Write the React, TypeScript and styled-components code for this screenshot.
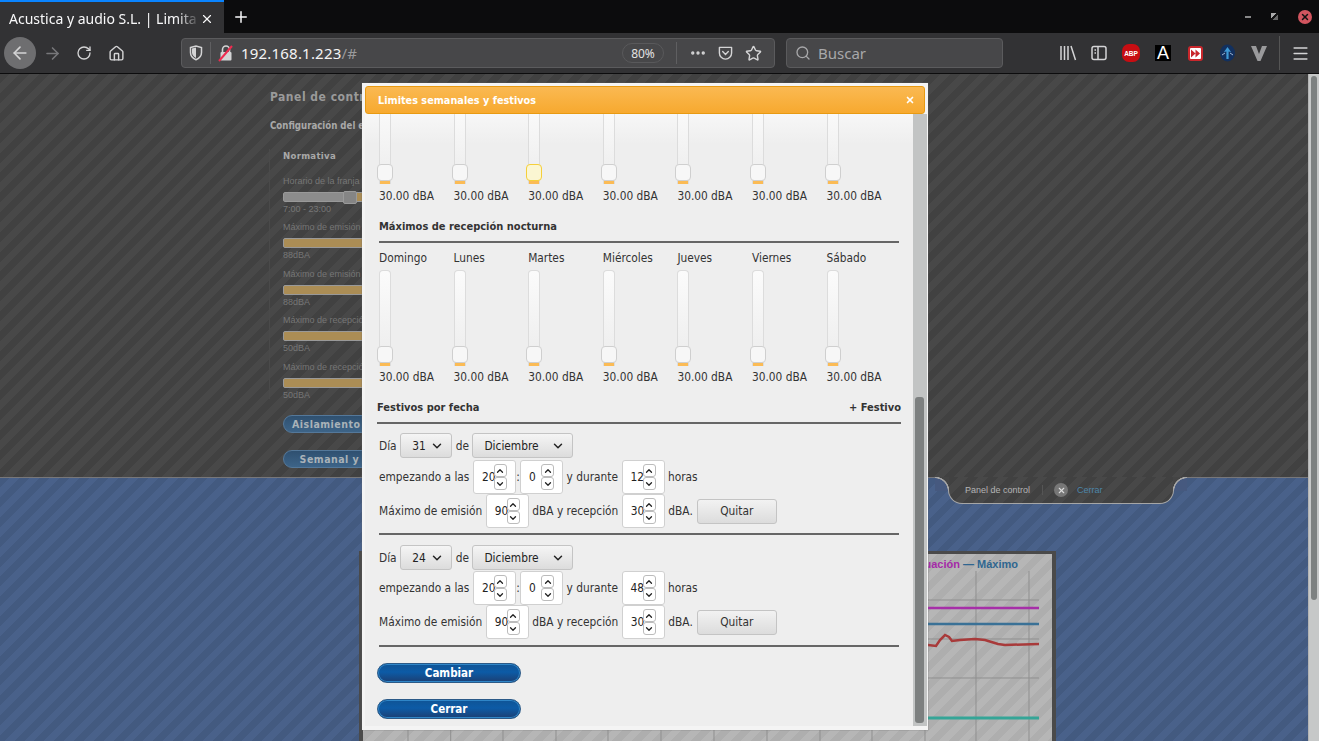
import React from 'react';
import styled, { createGlobalStyle, css } from 'styled-components';
import {
  ArrowLeft,
  ArrowRight,
  ChevronDown,
  ChevronUp,
  Home,
  Menu,
  MoreHorizontal,
  Plus,
  RotateCw,
  Search,
  Star,
  X,
} from 'lucide-react';

const GlobalStyle = createGlobalStyle`
  html, body {
    margin: 0;
    height: 100%;
    overflow: hidden;
    background: #333;
  }
  * {
    box-sizing: border-box;
  }
`;

const stripes = (a: string, b: string) => css`
  background-image: repeating-linear-gradient(135deg, ${a} 0 7px, ${b} 7px 14px);
`;

const condensed = `'DejaVu Sans Condensed', 'DejaVu Sans', sans-serif`;

const Screen = styled.div`
  width: 1319px;
  height: 741px;
  display: flex;
  flex-direction: column;
  position: relative;
  overflow: hidden;
  font-family: ${condensed};
`;

/* browser chrome */
const TabBar = styled.div`
  height: 33px;
  flex: none;
  display: flex;
  align-items: stretch;
  background: #0c0c0d;
  color: #f9f9fa;
  font-family: 'Noto Sans', sans-serif;
`;

const ActiveTab = styled.div`
  width: 224px;
  display: flex;
  align-items: center;
  padding: 2px 10px 0 9px;
  background: #323234;
  border-top: 2px solid #0a84ff;
  font-size: 14px;
`;

const TabTitle = styled.span`
  flex: 1;
  white-space: nowrap;
  -webkit-mask-image: linear-gradient(90deg, #000 88%, transparent);
  mask-image: linear-gradient(90deg, #000 88%, transparent);
`;

const NewTab = styled.div`
  width: 34px;
  display: flex;
  align-items: center;
  justify-content: center;
`;

const WindowControls = styled.div`
  margin-left: auto;
  display: flex;
  align-items: center;
  gap: 20px;
  padding: 0 7px 0 0;
`;

const Minimize = styled.span`
  width: 6px;
  height: 2px;
  background: #888;
`;

const Restore = styled.span`
  width: 7px;
  height: 7px;
  background: linear-gradient(135deg, #aaa 0 40%, #111 40% 60%, #666 60%);
`;

const CloseDot = styled.span`
  width: 14px;
  height: 14px;
  border-radius: 50%;
  background: #d2555f;
  color: #111;
  display: flex;
  align-items: center;
  justify-content: center;
`;

const NavBar = styled.div`
  height: 41px;
  flex: none;
  display: flex;
  align-items: center;
  background: #323234;
  border-bottom: 1px solid #0c0c0d;
  color: #d4d4d5;
  font-family: 'Noto Sans', sans-serif;
`;

const BackButton = styled.div`
  width: 32px;
  height: 32px;
  margin-left: 4px;
  border-radius: 50%;
  background: #6e6e70;
  display: flex;
  align-items: center;
  justify-content: center;
`;

const NavIcon = styled.div<{ $w: number; $dim?: boolean }>`
  width: ${(p) => p.$w}px;
  height: 30px;
  flex: none;
  display: flex;
  align-items: center;
  justify-content: center;
  color: ${(p) => (p.$dim ? '#77777a' : '#d4d4d5')};
`;

const UrlBar = styled.div`
  width: 594px;
  height: 30px;
  margin-left: 49px;
  display: flex;
  align-items: center;
  background: #474749;
  border: 1px solid #5b5b5d;
  border-radius: 4px;
`;

const UrlSep = styled.span`
  width: 1px;
  height: 22px;
  flex: none;
  background: #5f5f61;
`;

const UrlText = styled.span`
  width: 389px;
  font-size: 15px;
  letter-spacing: 0.2px;
  color: #f4f4f4;
  white-space: nowrap;

  span {
    color: #9a9a9c;
  }
`;

const ZoomPill = styled.span`
  width: 42px;
  height: 20px;
  flex: none;
  margin-right: 12px;
  border: 1px solid #59595b;
  border-radius: 10px;
  font-size: 12px;
  color: #e2e2e2;
  display: flex;
  align-items: center;
  justify-content: center;
`;

const SearchBar = styled.div`
  width: 217px;
  height: 30px;
  margin-left: 11px;
  padding-left: 8px;
  display: flex;
  align-items: center;
  gap: 7px;
  background: #474749;
  border: 1px solid #5b5b5d;
  border-radius: 4px;
  font-size: 15px;
  color: #a8a8aa;
`;

const Tools = styled.div`
  margin-left: 50px;
  display: flex;
  align-items: center;
`;

const ToolSep = styled.span`
  width: 1px;
  height: 34px;
  margin: 0 4px 0 4px;
  background: #555;
`;

const AbpBadge = styled.div`
  width: 18px;
  height: 18px;
  border-radius: 7px;
  background: #c70d12;
  color: #fff;
  font: bold 6.5px 'Liberation Sans', sans-serif;
  display: flex;
  align-items: center;
  justify-content: center;
`;

const BlackBadge = styled.div`
  width: 16px;
  height: 16px;
  background: #000;
  color: #fff;
  font: 18px 'Liberation Sans', sans-serif;
  display: flex;
  align-items: center;
  justify-content: center;
`;

const RedBadge = styled.div`
  width: 15px;
  height: 15px;
  border: 2px solid #c9272c;
  border-radius: 3px;
  background: #fff;
  display: flex;
  align-items: center;
  justify-content: center;
`;

/* page behind the dialog */
const Viewport = styled.div`
  flex: 1;
  min-height: 0;
  display: flex;
`;

const Page = styled.div`
  flex: 1;
  min-width: 0;
  display: flex;
  flex-direction: column;
  overflow: hidden;
`;

const PageScrollbar = styled.div`
  width: 11px;
  flex: none;
  padding: 2px 2px 0;
  background: #c6c8c8;
  border-left: 1px solid #b4b4b4;
`;

const PageThumb = styled.div`
  height: 524px;
  background: #7d8181;
  border-radius: 3px;
`;

const ControlPanel = styled.div`
  height: 404px;
  flex: none;
  padding: 15px 0 0 270px;
  ${stripes('#414141', '#484848')}
  border-bottom: 1px solid #77777a;
`;

const PanelTitle = styled.div`
  font-size: 12px;
  line-height: 16px;
  font-weight: bold;
  letter-spacing: 0.5px;
  color: #9a9a9a;
`;

const PanelSub = styled.div`
  margin-top: 14px;
  font-size: 9.6px;
  line-height: 14px;
  font-weight: bold;
  color: #a8a8a8;
`;

const PanelColumn = styled.div`
  margin: 16px 0 0 -1px;
  padding-left: 13px;
  border-left: 1px solid #4a4a4a;
  height: 250px;
`;

const PanelHeading = styled.div`
  font-size: 9.5px;
  line-height: 14px;
  font-weight: bold;
  color: #a8a8a8;
  letter-spacing: 0.3px;
`;

const FieldLabel = styled.div<{ $top: number }>`
  margin-top: ${(p) => p.$top}px;
  font: 9px/12px 'Liberation Sans', sans-serif;
  color: #767676;
  white-space: nowrap;
`;

const Bar = styled.div<{ $range?: boolean }>`
  height: 10px;
  width: 300px;
  margin-top: 5px;
  border: 1px solid #999;
  border-radius: 2px;
  background: ${(p) => (p.$range ? 'linear-gradient(90deg, #8c8c8c 0 60px, #a98c56 60px)' : '#ab8d55')};
  position: relative;
`;

const BarHandle = styled.span`
  position: absolute;
  left: 59px;
  top: -2px;
  width: 14px;
  height: 13px;
  background: #858585;
  border: 1px solid #9a9a9a;
  border-radius: 2px;
`;

const BarValue = styled.div`
  margin-top: 1px;
  font: 9px/12px 'Liberation Sans', sans-serif;
  color: #767676;
`;

const PanelButton = styled.div<{ $top: number }>`
  width: 240px;
  height: 18px;
  margin-top: ${(p) => p.$top}px;
  padding-left: 8px;
  border: 1px solid #54789a;
  border-radius: 9px;
  background: linear-gradient(#2f5070, #3d6488);
  color: #a9b2b8;
  font-size: 10.5px;
  line-height: 16px;
  font-weight: bold;
  letter-spacing: 0.5px;
  white-space: nowrap;
`;

const BlueArea = styled.div`
  flex: 1;
  min-height: 0;
  ${stripes('#435a80', '#49618a')}
`;

const FooterTab = styled.div`
  width: 226px;
  height: 27px;
  margin-left: 948px;
  margin-top: -1px;
  padding-left: 16px;
  display: flex;
  align-items: center;
  position: relative;
  ${stripes('#414141', '#484848')}
  border: 1px solid #a6a6a6;
  border-top: none;
  border-radius: 0 0 14px 14px;
  font: 9px 'Liberation Sans', sans-serif;
  color: #b4b4b4;

  &::before,
  &::after {
    content: '';
    position: absolute;
    top: 0;
    width: 14px;
    height: 14px;
  }

  &::before {
    left: -14px;
    background: radial-gradient(circle at 0 100%, #46597f 12.5px, #a6a6a6 13px 14px, #444 14.5px);
  }

  &::after {
    right: -14px;
    background: radial-gradient(circle at 100% 100%, #46597f 12.5px, #a6a6a6 13px 14px, #444 14.5px);
  }
`;

const FooterSep = styled.span`
  width: 1px;
  height: 10px;
  margin: 0 11px 0 12px;
  background: #555;
`;

const FooterClose = styled.span`
  width: 14px;
  height: 14px;
  margin-right: 9px;
  border-radius: 50%;
  background: #777;
  color: #ddd;
  display: flex;
  align-items: center;
  justify-content: center;
`;

const FooterLink = styled.span`
  color: #4d86a8;
`;

const Chart = styled.div`
  width: 697px;
  height: 200px;
  margin: 47px 0 0 359px;
  border: solid #4a4a4a;
  border-width: 3px 4px 0 4px;
  position: relative;
  ${stripes('#aeaeae', '#b6b6b6')}
`;

const ChartTab = styled.span`
  position: absolute;
  left: 0;
  top: -31px;
  width: 4px;
  height: 18px;
  background: #c9ccd0;
`;

const Legend = styled.div`
  height: 17px;
  padding: 3px 34px 0 0;
  text-align: right;
  font: bold 11px/14px 'Liberation Sans', sans-serif;
  color: #2f6690;

  span {
    color: #a52aa8;
  }
`;

const ChartSvg = styled.svg`
  display: block;
`;

/* dialog */
const Modal = styled.div`
  position: absolute;
  left: 362px;
  top: 83px;
  width: 566px;
  height: 647px;
  padding: 3px 1px 4px 3px;
  display: flex;
  flex-direction: column;
  background: #f4f4f4;
  box-shadow: 0 0 1px #666;
`;

const ModalHeader = styled.div`
  width: 560px;
  height: 28px;
  flex: none;
  padding: 0 9px 0 12px;
  display: flex;
  align-items: center;
  justify-content: space-between;
  background: linear-gradient(#fab952, #f7a92f);
  border: 1px solid #e89a12;
  border-radius: 3px;
  color: #fff;
  font-size: 10.8px;
  font-weight: bold;
`;

const ModalBody = styled.div`
  flex: 1;
  min-height: 0;
  display: flex;
  overflow: hidden;
  background: linear-gradient(#f7f7f7, #eee 30px);
  color: #333;
  font-size: 11.8px;
`;

const Content = styled.div`
  width: 548px;
  flex: none;
  padding: 0 14px;
`;

const ModalScroll = styled.div`
  flex: 1;
  padding: 283px 3px 0 2px;
  background: #c2c4c4;
`;

const ModalThumb = styled.div`
  height: 326px;
  background: #7d8080;
  border-radius: 3px;
`;

const SliderGrid = styled.div<{ $clipped?: boolean }>`
  display: grid;
  grid-template-columns: repeat(7, 74.6px);
  margin-top: ${(p) => (p.$clipped ? '-10px' : '0')};
`;

const SliderCell = styled.div`
  display: flex;
  flex-direction: column;
`;

const DayLabel = styled.div`
  height: 14px;
  line-height: 14px;
  margin: 8px 0 5px;
`;

const Track = styled.div<{ $height: number }>`
  width: 12px;
  height: ${(p) => p.$height}px;
  position: relative;
  background: linear-gradient(#fbfbfb, #ececec);
  border: 1px solid #dcdcdc;
  border-bottom: none;
  border-radius: 4px 4px 0 0;
`;

const Fill = styled.span`
  position: absolute;
  left: 0;
  right: 0;
  bottom: 0;
  height: 5px;
  background: #fbbb55;
`;

const Handle = styled.span<{ $active?: boolean }>`
  position: absolute;
  left: -3px;
  bottom: 3px;
  width: 16px;
  height: 17px;
  border: 1px solid ${(p) => (p.$active ? '#f5cf3a' : '#cfcfcf')};
  border-radius: 4px;
  background: ${(p) => (p.$active ? '#fbf6d2' : '#f7f7f7')};
`;

const SliderValue = styled.div<{ $gap: number }>`
  margin-top: ${(p) => p.$gap}px;
  height: 14px;
  line-height: 14px;
  white-space: nowrap;
`;

const SectionHead = styled.div<{ $top: number; $wide?: boolean }>`
  margin: ${(p) => p.$top}px ${(p) => (p.$wide ? '-2px' : '0')} 0;
  padding-bottom: 7px;
  display: flex;
  justify-content: space-between;
  line-height: 14px;
  font-size: 11px;
  font-weight: bold;
  border-bottom: 2px solid #666;
`;

const Row = styled.div<{ $height: number; $top?: number }>`
  height: ${(p) => p.$height}px;
  margin-top: ${(p) => p.$top ?? 0}px;
  display: flex;
  align-items: center;
  gap: 3.5px;
  white-space: nowrap;
`;

const Colon = styled.span`
  margin: 0 -3.2px;
`;

const Select = styled.div<{ $width: number }>`
  width: ${(p) => p.$width}px;
  height: 25px;
  padding: 0 7px 0 11px;
  display: flex;
  align-items: center;
  justify-content: space-between;
  border: 1px solid #c4c4c4;
  border-radius: 3px;
  background: linear-gradient(#f5f5f5, #dcdcdc);
  color: #222;
`;

const NumberBox = styled.div`
  width: 43px;
  height: 34px;
  flex: none;
  padding-left: 8px;
  display: flex;
  align-items: center;
  border: 1px solid #d0d0d0;
  border-radius: 3px;
  background: #fff;
  color: #222;
`;

const NumberValue = styled.span`
  width: 12px;
`;

const Spinner = styled.div`
  display: flex;
  flex-direction: column;
`;

const SpinButton = styled.div`
  width: 13px;
  height: 13px;
  display: flex;
  align-items: center;
  justify-content: center;
  border: 1px solid #bcbcbc;
  border-radius: 3px;
  background: #fff;
  color: #222;
`;

const Quitar = styled.div`
  width: 80px;
  height: 25px;
  margin-left: 0.5px;
  display: flex;
  align-items: center;
  justify-content: center;
  border: 1px solid #c4c4c4;
  border-radius: 3px;
  background: linear-gradient(#f2f2f2, #dcdcdc);
`;

const Rule = styled.div<{ $top: number }>`
  height: 2px;
  margin-top: ${(p) => p.$top}px;
  background: #666;
`;

const BlueButton = styled.div<{ $top: number }>`
  width: 144px;
  height: 20px;
  margin: ${(p) => p.$top}px 0 0 -2px;
  display: flex;
  align-items: center;
  justify-content: center;
  border: 1px solid #2b5a88;
  border-radius: 10px;
  background: linear-gradient(#0f5496, #0d5ba6 45%, #1c3f73);
  box-shadow: inset 0 0 0 1px #2f86c8;
  color: #fff;
  font-size: 11.5px;
  font-weight: bold;
`;

const days = ['Domingo', 'Lunes', 'Martes', 'Miércoles', 'Jueves', 'Viernes', 'Sábado'];

function NumberField({ value }: { value: string }) {
  return (
    <NumberBox>
      <NumberValue>{value}</NumberValue>
      <Spinner>
        <SpinButton>
          <ChevronUp size={10} strokeWidth={3} />
        </SpinButton>
        <SpinButton>
          <ChevronDown size={10} strokeWidth={3} />
        </SpinButton>
      </Spinner>
    </NumberBox>
  );
}

function Holiday({ day, duration, first }: { day: string; duration: string; first?: boolean }) {
  return (
    <>
      <Row $height={25} $top={first ? 9 : 10}>
        <span>Día</span>
        <Select $width={52}>
          <span>{day}</span>
          <ChevronDown size={14} strokeWidth={2.5} />
        </Select>
        <span>de</span>
        <Select $width={101}>
          <span>Diciembre</span>
          <ChevronDown size={14} strokeWidth={2.5} />
        </Select>
      </Row>
      <Row $height={34} $top={first ? 2 : 1}>
        <span>empezando a las</span>
        <NumberField value="20" />
        <Colon>:</Colon>
        <NumberField value="0" />
        <span>y durante</span>
        <NumberField value={duration} />
        <span>horas</span>
      </Row>
      <Row $height={34}>
        <span>Máximo de emisión</span>
        <NumberField value="90" />
        <span>dBA y recepción</span>
        <NumberField value="30" />
        <span>dBA.</span>
        <Quitar>Quitar</Quitar>
      </Row>
      <Rule $top={first ? 5 : 6} />
    </>
  );
}

function LimitChart() {
  // x positions are offset by the chart's left edge (363)
  const ox = 363;
  const oy = 571;
  const verticals = [408, 450.7, 503, 556, 608, 661, 714, 767, 820, 872, 925, 976, 1029];
  const red = [
    [365, 645], [928, 645], [936, 646], [940, 640], [945, 635], [949, 637], [952, 641], [960, 640],
    [975, 639], [985, 640], [998, 644], [1005, 645], [1039, 644],
  ];
  return (
    <ChartSvg width={689} height={180} viewBox={`${ox} ${oy} 689 180`}>
      {verticals.map((x) => (
        <line key={x} x1={x} x2={x} y1={oy} y2={oy + 180} stroke="#8f8f8f" strokeWidth={1} />
      ))}
      {[600, 639, 678].map((y) => (
        <line key={y} x1={365} x2={1039} y1={y} y2={y} stroke="#8f8f8f" strokeWidth={1} />
      ))}
      <line x1={365} x2={1039} y1={608} y2={608} stroke="#a62fa8" strokeWidth={2.5} />
      <line x1={365} x2={1039} y1={624} y2={624} stroke="#3a7196" strokeWidth={2.5} />
      <line x1={365} x2={1039} y1={718} y2={718} stroke="#35a597" strokeWidth={3} />
      <polyline
        points={red.map((p) => p.join(',')).join(' ')}
        fill="none"
        stroke="#a83a3a"
        strokeWidth={2.5}
      />
    </ChartSvg>
  );
}

function ShieldIcon() {
  return (
    <svg width="14" height="16" viewBox="0 0 14 16" fill="none">
      <path d="M1.5 2.5 7 1l5.5 1.5v5c0 3.5-2.5 6-5.5 7.2C4 13.5 1.5 11 1.5 7.5z" stroke="#d4d4d5" strokeWidth="1.5" />
      <path d="M7 2.5v10.5C4.8 12 3 10 3 7.5V3.6z" fill="#d4d4d5" />
    </svg>
  );
}

function InsecureLock() {
  return (
    <svg width="16" height="18" viewBox="0 0 16 18" fill="none">
      <path d="M4.5 8V5.5a3.5 3.5 0 0 1 7 0V8" stroke="#d4d4d5" strokeWidth="1.6" />
      <rect x="2.5" y="8" width="11" height="8.5" rx="1" fill="#d4d4d5" />
      <path d="M1 17 14 2" stroke="#ef2b50" strokeWidth="2" />
    </svg>
  );
}

function PocketIcon() {
  return (
    <svg width="16" height="16" viewBox="0 0 16 16" fill="none" stroke="#d4d4d5" strokeWidth="1.5">
      <path d="M1.5 2h13v6a6.5 6.5 0 0 1-13 0z" strokeLinejoin="round" />
      <path d="M5 6.5 8 9.5l3-3" strokeLinecap="round" />
    </svg>
  );
}

function LibraryIcon() {
  return (
    <svg width="18" height="16" viewBox="0 0 18 16" fill="none" stroke="#d4d4d5" strokeWidth="1.5">
      <path d="M2 1v14M5.5 1v14M9 1v14M12 1l4.5 14" />
    </svg>
  );
}

function SidebarIcon() {
  return (
    <svg width="16" height="16" viewBox="0 0 16 16" fill="none" stroke="#d4d4d5" strokeWidth="1.5">
      <rect x="1" y="1.5" width="14" height="13" rx="2" />
      <path d="M7 1.5v13M3.5 5H5M3.5 8H5" />
    </svg>
  );
}

function ForwardGlyph() {
  return (
    <svg width="9" height="9" viewBox="0 0 9 9" fill="#c9272c">
      <path d="M0 0.5 4.5 4.5 0 8.5zM4.5 0.5 9 4.5 4.5 8.5z" />
    </svg>
  );
}

function GlobeIcon() {
  return (
    <svg width="17" height="18" viewBox="0 0 17 18">
      <ellipse cx="8.5" cy="9" rx="7.5" ry="8.5" fill="#12305e" />
      <path d="M8.5 3 12 8 9.6 7.5V15H7.4V7.5L5 8z" fill="#3f9ad6" />
      <path d="M3 11l3-2M14 11l-3-2" stroke="#9fb6d6" strokeWidth="1" />
    </svg>
  );
}

function VeeIcon() {
  return (
    <svg width="16" height="15" viewBox="0 0 16 15">
      <path d="M0 0h5l3 8 3-8h5L9.5 15h-3z" fill="#9a9a9c" />
    </svg>
  );
}

export default function App() {
  return (
    <>
      <GlobalStyle />
      <Screen>
        <TabBar>
          <ActiveTab>
            <TabTitle>Acustica y audio S.L. | Limita</TabTitle>
            <X size={14} strokeWidth={2} />
          </ActiveTab>
          <NewTab>
            <Plus size={18} strokeWidth={2} />
          </NewTab>
          <WindowControls>
            <Minimize />
            <Restore />
            <CloseDot>
              <X size={10} strokeWidth={3.5} />
            </CloseDot>
          </WindowControls>
        </TabBar>
        <NavBar>
          <BackButton>
            <ArrowLeft size={20} strokeWidth={2} />
          </BackButton>
          <NavIcon $w={32} $dim>
            <ArrowRight size={19} strokeWidth={2} />
          </NavIcon>
          <NavIcon $w={32}>
            <RotateCw size={16} strokeWidth={2} />
          </NavIcon>
          <NavIcon $w={32}>
            <Home size={17} strokeWidth={2} />
          </NavIcon>
          <UrlBar>
            <NavIcon $w={28}>
              <ShieldIcon />
            </NavIcon>
            <UrlSep />
            <NavIcon $w={30}>
              <InsecureLock />
            </NavIcon>
            <UrlText>
              192.168.1.223<span>/#</span>
            </UrlText>
            <ZoomPill>80%</ZoomPill>
            <UrlSep />
            <NavIcon $w={41}>
              <MoreHorizontal size={18} strokeWidth={2.5} />
            </NavIcon>
            <NavIcon $w={15}>
              <PocketIcon />
            </NavIcon>
            <NavIcon $w={41}>
              <Star size={17} strokeWidth={2} />
            </NavIcon>
          </UrlBar>
          <SearchBar>
            <Search size={16} strokeWidth={2} />
            Buscar
          </SearchBar>
          <Tools>
            <NavIcon $w={30}>
              <LibraryIcon />
            </NavIcon>
            <NavIcon $w={32}>
              <SidebarIcon />
            </NavIcon>
            <NavIcon $w={32}>
              <AbpBadge>ABP</AbpBadge>
            </NavIcon>
            <NavIcon $w={32}>
              <BlackBadge>A</BlackBadge>
            </NavIcon>
            <NavIcon $w={32}>
              <RedBadge>
                <ForwardGlyph />
              </RedBadge>
            </NavIcon>
            <NavIcon $w={32}>
              <GlobeIcon />
            </NavIcon>
            <NavIcon $w={32}>
              <VeeIcon />
            </NavIcon>
            <ToolSep />
            <NavIcon $w={32}>
              <Menu size={19} strokeWidth={2} />
            </NavIcon>
          </Tools>
        </NavBar>
        <Viewport>
          <Page>
            <ControlPanel>
              <PanelTitle>Panel de control</PanelTitle>
              <PanelSub>Configuración del equipo</PanelSub>
              <PanelColumn>
                <PanelHeading>Normativa</PanelHeading>
                <FieldLabel $top={12}>Horario de la franja diurna</FieldLabel>
                <Bar $range>
                  <BarHandle />
                </Bar>
                <BarValue>7:00 - 23:00</BarValue>
                <FieldLabel $top={6}>Máximo de emisión diurna</FieldLabel>
                <Bar />
                <BarValue>88dBA</BarValue>
                <FieldLabel $top={7}>Máximo de emisión nocturna</FieldLabel>
                <Bar />
                <BarValue>88dBA</BarValue>
                <FieldLabel $top={6}>Máximo de recepción diurna</FieldLabel>
                <Bar />
                <BarValue>50dBA</BarValue>
                <FieldLabel $top={7}>Máximo de recepción nocturna</FieldLabel>
                <Bar />
                <BarValue>50dBA</BarValue>
                <PanelButton $top={14}>Aislamiento</PanelButton>
                <PanelButton $top={17}>&nbsp;&nbsp;Semanal y festivos</PanelButton>
              </PanelColumn>
            </ControlPanel>
            <BlueArea>
              <FooterTab>
                Panel de control
                <FooterSep />
                <FooterClose>
                  <X size={9} strokeWidth={3} />
                </FooterClose>
                <FooterLink>Cerrar</FooterLink>
              </FooterTab>
              <Chart>
                <ChartTab />
                <Legend>
                  <span>— Evaluación</span> — Máximo
                </Legend>
                <LimitChart />
              </Chart>
            </BlueArea>
          </Page>
          <PageScrollbar>
            <PageThumb />
          </PageScrollbar>
        </Viewport>

        <Modal>
          <ModalHeader>
            Limites semanales y festivos
            <X size={10} strokeWidth={4} />
          </ModalHeader>
          <ModalBody>
            <Content>
              <SliderGrid $clipped>
                {days.map((d, i) => (
                  <SliderCell key={d}>
                    <Track $height={80}>
                      <Fill />
                      <Handle $active={i === 2} />
                    </Track>
                    <SliderValue $gap={5}>30.00 dBA</SliderValue>
                  </SliderCell>
                ))}
              </SliderGrid>
              <SectionHead $top={17}>Máximos de recepción nocturna</SectionHead>
              <SliderGrid>
                {days.map((d) => (
                  <SliderCell key={d}>
                    <DayLabel>{d}</DayLabel>
                    <Track $height={96}>
                      <Fill />
                      <Handle />
                    </Track>
                    <SliderValue $gap={4}>30.00 dBA</SliderValue>
                  </SliderCell>
                ))}
              </SliderGrid>
              <SectionHead $top={17} $wide>
                <span>Festivos por fecha</span>
                <span>+ Festivo</span>
              </SectionHead>
              <Holiday day="31" duration="12" first />
              <Holiday day="24" duration="48" />
              <BlueButton $top={16}>Cambiar</BlueButton>
              <BlueButton $top={16}>Cerrar</BlueButton>
            </Content>
            <ModalScroll>
              <ModalThumb />
            </ModalScroll>
          </ModalBody>
        </Modal>
      </Screen>
    </>
  );
}
